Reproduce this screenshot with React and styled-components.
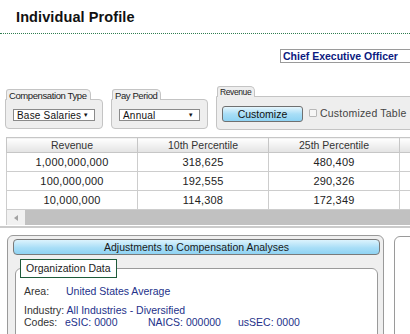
import styled, { createGlobalStyle } from "styled-components";

const Global = createGlobalStyle`
  html, body { margin: 0; padding: 0; background: #fff; }
  body { font-family: "Liberation Sans", Arial, sans-serif; color: #222; }
`;

const Page = styled.div`
  width: 410px;
  height: 334px;
  overflow: hidden;
`;

const Header = styled.div`
  height: 33px;
  padding-left: 16px;
  border-bottom: 1px dotted #2f7d4f;
  display: flex;
  align-items: center;
`;

const Title = styled.h1`
  margin: 0;
  font-size: 14.5px;
  font-weight: bold;
  color: #111;
  letter-spacing: 0.1px;
`;

const JobRow = styled.div`
  margin-top: 15px;
  padding-left: 280px;
`;

const JobBox = styled.div`
  width: 160px;
  height: 12px;
  border: 1px solid #9a9a9a;
  padding-left: 2px;
  font-size: 10.5px;
  line-height: 12px;
  font-weight: bold;
  color: #0b1a80;
  white-space: nowrap;
`;

const Controls = styled.div`
  display: flex;
  align-items: flex-end;
  gap: 8px;
  margin-top: 23px;
  padding-left: 5px;
`;

const Group = styled.div`
  display: flex;
  flex-direction: column;
  align-items: flex-start;
  flex-shrink: 0;
  margin-bottom: ${(p) => p.$drop || 0}px;
`;

const Tab = styled.div`
  position: relative;
  z-index: 1;
  margin-left: 1px;
  margin-bottom: -1px;
  height: 10px;
  padding: 0 3px 0 2px;
  background: #eeeeee;
  border: 1px solid #c4c4c4;
  border-bottom: none;
  border-radius: 3px 5px 0 0;
  font-size: ${(p) => p.$size || 9.5}px;
  line-height: 11px;
  letter-spacing: -0.4px;
  color: #222;
  white-space: nowrap;
`;

const Box = styled.div`
  display: flex;
  align-items: center;
  gap: 6px;
  box-sizing: border-box;
  width: ${(p) => p.$width}px;
  height: ${(p) => p.$height}px;
  padding: 0 ${(p) => p.$pad || 7}px;
  background: #eeeeee;
  border: 1px solid #c4c4c4;
  border-radius: 0 4px 4px 4px;
  white-space: nowrap;
`;

const Select = styled.div`
  display: flex;
  align-items: center;
  justify-content: space-between;
  box-sizing: border-box;
  width: 82px;
  height: 12px;
  margin-top: 2px;
  padding: 0 5px 0 3px;
  background: #fff;
  border: 1px solid #8a8a8a;
  font-size: 10px;
  letter-spacing: 0.2px;
  color: #111;
`;

const Arrow = styled.span`
  font-size: 6px;
  line-height: 6px;
  color: #111;
`;

const Button = styled.div`
  box-sizing: border-box;
  width: 81px;
  height: 16px;
  margin-top: 2px;
  border: 1px solid #707070;
  border-radius: 3px;
  background: linear-gradient(#e6f6fd, #a9def7 50%, #8ed3f3);
  font-size: 10.5px;
  line-height: 14px;
  text-align: center;
  color: #111;
`;

const Check = styled.span`
  display: inline-block;
  box-sizing: border-box;
  width: 8px;
  height: 8px;
  border: 1px solid #b8b8b8;
  border-radius: 1px;
  background: #f6f6f6;
  margin-right: -3px;
`;

const CheckLabel = styled.span`
  font-size: 10.5px;
  color: #444;
  letter-spacing: 0.2px;
`;

const TableWrap = styled.div`
  margin: 7px 0 0 6px;
  width: 520px;
`;

const Grid = styled.table`
  border-collapse: collapse;
  table-layout: fixed;
  width: 520px;
  font-size: 11px;
`;

const Th = styled.th`
  width: 130px;
  height: 14px;
  padding: 0;
  border: 1px solid #c6c6c6;
  background: linear-gradient(#ffffff, #e3e3e3);
  font-weight: normal;
  font-size: 10.5px;
  color: #333;
`;

const Td = styled.td`
  height: 18px;
  padding: 0;
  border: 1px solid #cdcdcd;
  text-align: center;
  color: #222;
  letter-spacing: 0.2px;
`;

const Scrollbar = styled.div`
  display: flex;
  height: 15px;
  border-left: 1px solid #cdcdcd;
`;

const ScrollButton = styled.div`
  width: 18px;
  background: #f1f1f1;
  display: flex;
  align-items: center;
  justify-content: center;
  &::before {
    content: "";
    border-style: solid;
    border-width: 3px 4px 3px 0;
    border-color: transparent #a3a3a3 transparent transparent;
  }
`;

const Thumb = styled.div`
  flex: 1;
  background: #c1c1c1;
`;

const Divider = styled.div`
  height: 2px;
  margin-top: 1px;
  background: #cbcbcb;
`;

const Bottom = styled.div`
  display: flex;
  align-items: flex-start;
  gap: 10px;
  margin-top: 7px;
  padding-left: 7px;
`;

const Panel = styled.div`
  box-sizing: border-box;
  flex-shrink: 0;
  width: 377px;
  height: 120px;
  padding: 3px 3px 0 5px;
  background: #efefef;
  border: 1px solid #9a9a9a;
  border-radius: 6px;
`;

const SidePanel = styled.div`
  flex-shrink: 0;
  width: 100px;
  height: 120px;
  margin-top: 1px;
  background: #fff;
  border: 1px solid #9a9a9a;
  border-radius: 6px;
`;

const PanelHead = styled.div`
  box-sizing: border-box;
  height: 16px;
  border: 1px solid #7a7a7a;
  border-radius: 4px;
  background: linear-gradient(#dcf3fd, #a9def7 55%, #8fd3f3);
  font-size: 10.5px;
  line-height: 14px;
  text-align: center;
  color: #1a1a1a;
`;

const Fieldset = styled.fieldset`
  margin: 4px 2px 0 2px;
  padding: 0 4px 20px;
  background: #fff;
  border: 1px solid #9a9a9a;
  border-radius: 6px;
`;

const Legend = styled.legend`
  padding: 0 5px;
  height: 17px;
  line-height: 17px;
  background: #fff;
  border: 1px solid #1e5b3a;
  font-size: 10.5px;
  color: #222;
`;

const Row = styled.div`
  display: grid;
  grid-template-columns: ${(p) => p.$cols || "42px auto"};
  margin: ${(p) => p.$top || 0}px 0 0 4px;
  font-size: 10.5px;
  line-height: 12px;
  white-space: nowrap;
`;

const Label = styled.span`
  color: #333;
`;

const Value = styled.span`
  color: #23318a;
`;

const rows = [
  ["1,000,000,000", "318,625", "480,409"],
  ["100,000,000", "192,555", "290,326"],
  ["10,000,000", "114,308", "172,349"],
];

export default function App() {
  return (
    <Page>
      <Global />
      <Header>
        <Title>Individual Profile</Title>
      </Header>
      <JobRow>
        <JobBox>Chief Executive Officer</JobBox>
      </JobRow>

      <Controls>
        <Group $drop={1}>
          <Tab>Compensation Type</Tab>
          <Box $width={98} $height={30}>
            <Select>
              Base Salaries <Arrow>▼</Arrow>
            </Select>
          </Box>
        </Group>
        <Group $drop={1}>
          <Tab>Pay Period</Tab>
          <Box $width={97} $height={30}>
            <Select>
              Annual <Arrow>▼</Arrow>
            </Select>
          </Box>
        </Group>
        <Group>
          <Tab $size={8.5}>Revenue</Tab>
          <Box $width={220} $height={34} $pad={5}>
            <Button>Customize</Button>
            <Check />
            <CheckLabel>Customized Table</CheckLabel>
          </Box>
        </Group>
      </Controls>

      <TableWrap>
        <Grid>
          <thead>
            <tr>
              <Th>Revenue</Th>
              <Th>10th Percentile</Th>
              <Th>25th Percentile</Th>
              <Th></Th>
            </tr>
          </thead>
          <tbody>
            {rows.map((r) => (
              <tr key={r[0]}>
                {r.map((c) => (
                  <Td key={c}>{c}</Td>
                ))}
                <Td></Td>
              </tr>
            ))}
          </tbody>
        </Grid>
        <Scrollbar>
          <ScrollButton />
          <Thumb />
        </Scrollbar>
      </TableWrap>
      <Divider />

      <Bottom>
        <Panel>
          <PanelHead>Adjustments to Compensation Analyses</PanelHead>
          <Fieldset>
            <Legend>Organization Data</Legend>
            <Row $top={7}>
              <Label>Area:</Label>
              <Value>United States Average</Value>
            </Row>
            <Row $top={7} $cols="auto">
              <span>
                <Label>Industry: </Label>
                <Value>All Industries - Diversified</Value>
              </span>
            </Row>
            <Row $cols="41px 83px 90px auto">
              <Label>Codes:</Label>
              <Value>eSIC: 0000</Value>
              <Value>NAICS: 000000</Value>
              <Value>usSEC: 0000</Value>
            </Row>
          </Fieldset>
        </Panel>
        <SidePanel />
      </Bottom>
    </Page>
  );
}
